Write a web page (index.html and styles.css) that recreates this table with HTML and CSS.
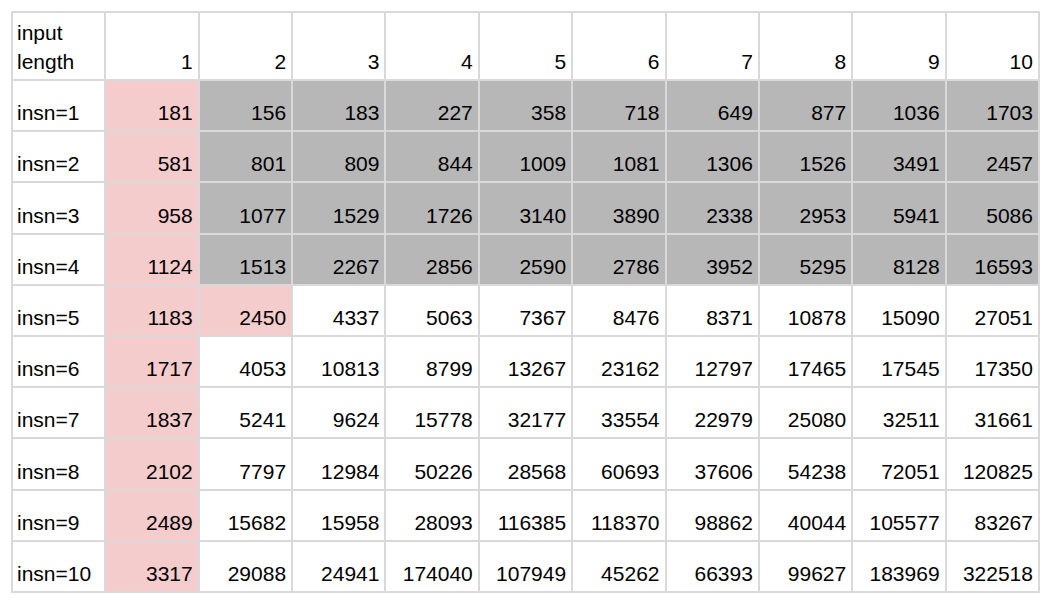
FILE: index.html
```html
<!DOCTYPE html>
<html>
<head>
<meta charset="utf-8">
<link rel="stylesheet" href="styles.css">
</head>
<body>
<table class="sheet">
<colgroup><col><col><col><col><col><col><col><col><col><col><col></colgroup>
<tr class="head"><td class="label">input length</td><td>1</td><td>2</td><td>3</td><td>4</td><td>5</td><td>6</td><td>7</td><td>8</td><td>9</td><td>10</td></tr>
<tr><td class="label">insn=1</td><td class="pink">181</td><td class="gray">156</td><td class="gray">183</td><td class="gray">227</td><td class="gray">358</td><td class="gray">718</td><td class="gray">649</td><td class="gray">877</td><td class="gray">1036</td><td class="gray">1703</td></tr>
<tr><td class="label">insn=2</td><td class="pink">581</td><td class="gray">801</td><td class="gray">809</td><td class="gray">844</td><td class="gray">1009</td><td class="gray">1081</td><td class="gray">1306</td><td class="gray">1526</td><td class="gray">3491</td><td class="gray">2457</td></tr>
<tr><td class="label">insn=3</td><td class="pink">958</td><td class="gray">1077</td><td class="gray">1529</td><td class="gray">1726</td><td class="gray">3140</td><td class="gray">3890</td><td class="gray">2338</td><td class="gray">2953</td><td class="gray">5941</td><td class="gray">5086</td></tr>
<tr><td class="label">insn=4</td><td class="pink">1124</td><td class="gray">1513</td><td class="gray">2267</td><td class="gray">2856</td><td class="gray">2590</td><td class="gray">2786</td><td class="gray">3952</td><td class="gray">5295</td><td class="gray">8128</td><td class="gray">16593</td></tr>
<tr><td class="label">insn=5</td><td class="pink">1183</td><td class="pink">2450</td><td>4337</td><td>5063</td><td>7367</td><td>8476</td><td>8371</td><td>10878</td><td>15090</td><td>27051</td></tr>
<tr><td class="label">insn=6</td><td class="pink">1717</td><td>4053</td><td>10813</td><td>8799</td><td>13267</td><td>23162</td><td>12797</td><td>17465</td><td>17545</td><td>17350</td></tr>
<tr><td class="label">insn=7</td><td class="pink">1837</td><td>5241</td><td>9624</td><td>15778</td><td>32177</td><td>33554</td><td>22979</td><td>25080</td><td>32511</td><td>31661</td></tr>
<tr><td class="label">insn=8</td><td class="pink">2102</td><td>7797</td><td>12984</td><td>50226</td><td>28568</td><td>60693</td><td>37606</td><td>54238</td><td>72051</td><td>120825</td></tr>
<tr><td class="label">insn=9</td><td class="pink">2489</td><td>15682</td><td>15958</td><td>28093</td><td>116385</td><td>118370</td><td>98862</td><td>40044</td><td>105577</td><td>83267</td></tr>
<tr><td class="label">insn=10</td><td class="pink">3317</td><td>29088</td><td>24941</td><td>174040</td><td>107949</td><td>45262</td><td>66393</td><td>99627</td><td>183969</td><td>322518</td></tr>
</table>
</body>
</html>
```
FILE: styles.css
```css
html, body {
  margin: 0;
  background: #ffffff;
}
body {
  padding: 11px 0 0 11px;
  font-family: "Liberation Sans", Arial, sans-serif;
  font-size: 21px;
  color: #000;
}
.sheet {
  border-collapse: collapse;
  table-layout: fixed;
  width: 1027px;
}
.sheet col {
  width: 93.36px;
}
.sheet td {
  border: 2px solid #d9d9d9;
  padding: 0 5px 3px 4px;
  line-height: 29px;
  height: 51.2px;
  box-sizing: border-box;
  vertical-align: bottom;
  text-align: right;
  white-space: nowrap;
}
.sheet .head td {
  height: 68px;
}
.sheet td.label {
  text-align: left;
  white-space: normal;
}
.sheet td.pink {
  background: #f4cccc;
}
.sheet td.gray {
  background: #b7b7b7;
}
```
